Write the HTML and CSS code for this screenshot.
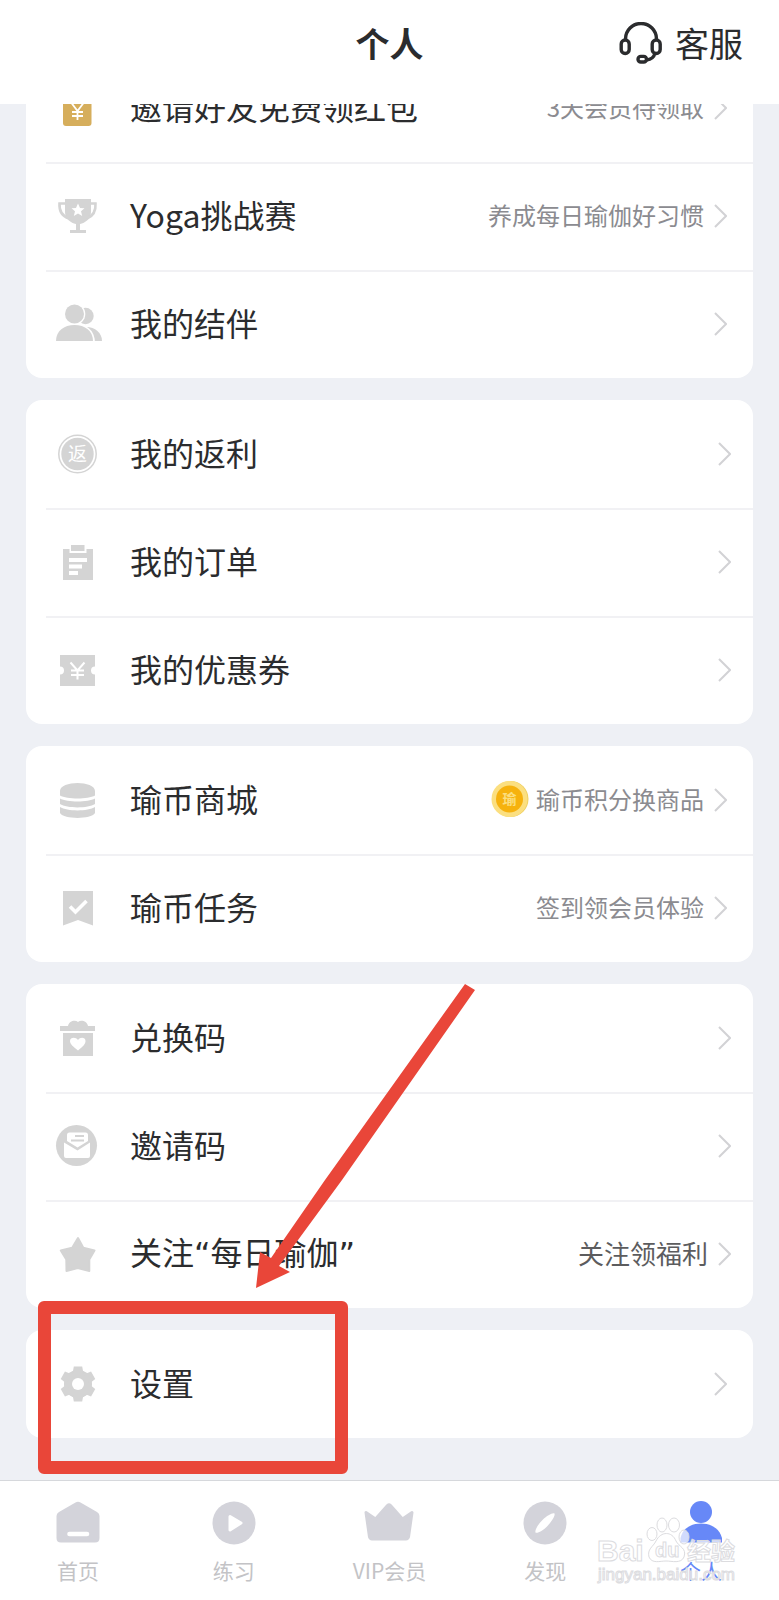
FILE: index.html
```html
<!DOCTYPE html>
<html lang="zh-CN">
<head>
<meta charset="utf-8">
<meta name="viewport" content="width=device-width, initial-scale=1">
<title>个人</title>
<link rel="stylesheet" href="styles.css">
</head>
<body>
<svg class="defs" aria-hidden="true">
  <symbol id="chevron" viewBox="0 0 13 24"><path d="M1 1 L12 12 L1 23" fill="none" stroke="currentColor" stroke-width="2"/></symbol>
</svg>
<div class="app">
  <header class="header">
    <h1 class="title">个人</h1>
    <button class="service" type="button">
      <svg class="service-icon" viewBox="0 0 44 42" fill="none" stroke="currentColor" stroke-width="3.400" aria-hidden="true">
        <path d="M6.500 18 V17 A15.500 15.500 0 0 1 37.500 17 V18"/>
        <rect x="2.200" y="18" width="8" height="13.500" rx="4"/>
        <rect x="33.200" y="18" width="8" height="13.500" rx="4"/>
        <path d="M36 31 C35 35.500 32 37.500 27.500 38"/>
        <rect x="19" y="34.400" width="8.500" height="5.600" rx="2.800"/>
      </svg>
      <span>客服</span>
    </button>
  </header>

  <main class="content">
    <section class="card">
      <a class="row" href="#invite-friends">
        <svg class="icon icon-gold" viewBox="0 0 48 48" aria-hidden="true"><rect x="9" y="6" width="28.500" height="36" rx="3" fill="currentColor"/><path d="M17.500 19 L23.500 27 L29.500 19 M18 28 H29 M18 32 H29 M23.500 27 V36" fill="none" stroke="#fff" stroke-width="1.800"/></svg>
        <span class="label">邀请好友免费领红包</span>
        <span class="hint">3天会员待领取</span>
        <svg class="chevron"><use href="#chevron"/></svg>
      </a>
      <a class="row" href="#challenge">
        <svg class="icon" viewBox="0 0 48 48" aria-hidden="true"><path d="M11 7 H37 V20 C37 27 31 31 26 32 V38 H32 V41 H16 V38 H22 V32 C17 31 11 27 11 20 Z" fill="currentColor"/><path d="M12 11.500 H5.500 C5 19 8 24 15 26.500 M36 11.500 H41.500 C42 19 39 24 33 26.500" fill="none" stroke="currentColor" stroke-width="2.600"/><path d="M24 11.500 L26 16 L30.500 16.300 L27 19.300 L28.200 24 L24 21.400 L19.800 24 L21 19.300 L17.500 16.300 L22 16 Z" fill="#fff"/></svg>
        <span class="label">Yoga挑战赛</span>
        <span class="hint">养成每日瑜伽好习惯</span>
        <svg class="chevron"><use href="#chevron"/></svg>
      </a>
      <a class="row" href="#companions">
        <svg class="icon" viewBox="0 0 48 48" aria-hidden="true"><circle cx="31.500" cy="16" r="8.200" fill="currentColor"/><path d="M30 27 C40 26 48 32 48 41 H30 Z" fill="currentColor"/><circle cx="20.500" cy="14" r="10.800" fill="#fff"/><path d="M0 43 C0 30 9 23.500 20.500 23.500 C32 23.500 41 30 41 43 Z" fill="#fff"/><circle cx="20.500" cy="14" r="9.500" fill="currentColor"/><path d="M2 41 C2 31 10 25 20.500 25 C31 25 39 31 39 41 Z" fill="currentColor"/></svg>
        <span class="label">我的结伴</span>
        <svg class="chevron"><use href="#chevron"/></svg>
      </a>
    </section>

    <section class="card">
      <a class="row row-wide" href="#rebate">
        <svg class="icon" viewBox="0 0 48 48" aria-hidden="true"><circle cx="23.500" cy="24" r="18.700" fill="none" stroke="currentColor" stroke-width="1.500"/><circle cx="23.500" cy="24" r="16.200" fill="currentColor"/><text x="23.500" y="31" class="rebate-char">返</text></svg>
        <span class="label">我的返利</span>
        <svg class="chevron"><use href="#chevron"/></svg>
      </a>
      <a class="row row-wide" href="#orders">
        <svg class="icon" viewBox="0 0 48 48" aria-hidden="true"><path d="M9 11 H15.500 V15 H32.500 V11 H39 V42 H9 Z M17 7 H30.500 V13 H17 Z" fill="currentColor"/><path d="M15 20 H33 V24 H15 Z M15 26.500 H28 V30.500 H15 Z M15 33 H24 V37 H15 Z" fill="#fff"/></svg>
        <span class="label">我的订单</span>
        <svg class="chevron"><use href="#chevron"/></svg>
      </a>
      <a class="row row-wide" href="#coupons">
        <svg class="icon" viewBox="0 0 48 48" aria-hidden="true"><path d="M6 9 H41 V20.500 A4 4 0 0 0 41 28.500 V40 H6 V28.500 A4 4 0 0 0 6 20.500 Z" fill="currentColor"/><path d="M16.500 16.500 L23.500 24.500 L30.500 16.500 M17 24.500 H30 M17 29 H30 M23.500 24 V33.500" fill="none" stroke="#fff" stroke-width="2"/></svg>
        <span class="label">我的优惠券</span>
        <svg class="chevron"><use href="#chevron"/></svg>
      </a>
    </section>

    <section class="card">
      <a class="row" href="#coin-shop">
        <svg class="icon" viewBox="0 0 48 48" aria-hidden="true"><path d="M6 15 C6 4.300 41 4.300 41 15 V19.500 C34 23.500 13 23.500 6 19.500 Z M6 22.500 C13 26.500 34 26.500 41 22.500 V28 C34 32.500 13 32.500 6 28 Z M6 31 C13 35.500 34 35.500 41 31 V37 C37 43.500 10 43.500 6 37 Z" fill="currentColor"/></svg>
        <span class="label">瑜币商城</span>
        <span class="hint">
          <svg class="coin" viewBox="0 0 38 38" aria-hidden="true"><circle cx="19.500" cy="19" r="18" fill="#eecf60"/><circle cx="18.500" cy="19" r="18" fill="#fbdf80"/><circle cx="18.500" cy="19" r="13.500" fill="#f6b20e"/><text x="18.500" y="24" class="coin-char">瑜</text></svg>
          瑜币积分换商品</span>
        <svg class="chevron"><use href="#chevron"/></svg>
      </a>
      <a class="row" href="#coin-tasks">
        <svg class="icon" viewBox="0 0 48 48" aria-hidden="true"><path d="M9 7 H39 V41.500 L24 36 L9 41.500 Z" fill="currentColor"/><path d="M16 22.500 L21.500 28 L32.500 17" fill="none" stroke="#fff" stroke-width="3.600"/></svg>
        <span class="label">瑜币任务</span>
        <span class="hint">签到领会员体验</span>
        <svg class="chevron"><use href="#chevron"/></svg>
      </a>
    </section>

    <section class="card">
      <a class="row row-wide" href="#redeem">
        <svg class="icon" viewBox="0 0 48 48" aria-hidden="true"><path d="M6 12 H14 C15 7 21 5.500 24 8 C27 5.500 33 7 34 12 H41 V17 H6 Z M9 19 H39 V42 H9 Z" fill="currentColor"/><path d="M24 36.500 C19 32.500 16 30 16 27 C16 23.500 21.500 22.500 24 26 C26.500 22.500 31.500 23.500 31.500 27 C31.500 30 29 32.500 24 36.500 Z" fill="#fff"/></svg>
        <span class="label">兑换码</span>
        <svg class="chevron"><use href="#chevron"/></svg>
      </a>
      <a class="row row-wide" href="#invite-code">
        <svg class="icon" viewBox="0 0 48 48" aria-hidden="true"><circle cx="22.500" cy="23.500" r="20.500" fill="currentColor"/><path d="M13 19 V13 Q13 10.500 15.500 10.500 H31.500 Q34 10.500 34 13 V19 L23.500 25.500 Z M10 20.500 L23.500 28.500 L36 20.500 V34 Q36 36 34 36 H12 Q10 36 10 34 Z" fill="#fff"/><path d="M21 14 H30 M17 18.500 H30" stroke="currentColor" stroke-width="2"/></svg>
        <span class="label">邀请码</span>
        <svg class="chevron"><use href="#chevron"/></svg>
      </a>
      <a class="row row-wide" href="#follow">
        <svg class="icon" viewBox="0 0 48 48" aria-hidden="true"><path d="M24 8 L29.300 17.800 L40.500 20.500 L35.300 29.500 L35.300 41 L23.700 38 L12.500 41 L12.300 29.500 L6.800 20.500 L18.200 17.800 Z" fill="currentColor" stroke="currentColor" stroke-width="2" stroke-linejoin="round"/></svg>
        <span class="label">关注<span class="quote">“</span>每日瑜伽<span class="quote">”</span></span>
        <span class="hint hint-strong">关注领福利</span>
        <svg class="chevron"><use href="#chevron"/></svg>
      </a>
    </section>

    <section class="card">
      <a class="row" href="#settings">
        <svg class="icon" viewBox="0 0 48 48" aria-hidden="true"><g fill="currentColor"><circle cx="24" cy="24" r="14"/><path id="teeth" d="M19.800 6.500 H28.200 L29 11 L32 14 H16 L19 11 Z M19.800 41.500 H28.200 L29 37 L32 34 H16 L19 37 Z"/><use href="#teeth" transform="rotate(60 24 24)"/><use href="#teeth" transform="rotate(120 24 24)"/></g><circle cx="24" cy="24" r="6" fill="#fff"/></svg>
        <span class="label">设置</span>
        <svg class="chevron"><use href="#chevron"/></svg>
      </a>
    </section>
  </main>

  <nav class="tabs">
    <a class="tab" href="#home">
      <svg class="tab-icon" viewBox="0 0 52 44" aria-hidden="true"><path d="M23.500 1.500 Q26 0 28.500 1.500 L45 11 Q47.500 12.500 47.500 15 V37 Q47.500 41.500 43 41.500 H9 Q4.500 41.500 4.500 37 V15 Q4.500 12.500 7 11 Z" fill="currentColor"/><path d="M17.500 33 H35" stroke="#fff" stroke-width="4.600" stroke-linecap="round"/></svg>
      <span>首页</span>
    </a>
    <a class="tab" href="#practice">
      <svg class="tab-icon" viewBox="0 0 52 44" aria-hidden="true"><circle cx="26" cy="22" r="21.500" fill="currentColor"/><path d="M22 15.500 L33 22 L22 29 Z" fill="#fff" stroke="#fff" stroke-width="3" stroke-linejoin="round"/></svg>
      <span>练习</span>
    </a>
    <a class="tab" href="#vip">
      <svg class="tab-icon" viewBox="0 0 52 44" aria-hidden="true"><path d="M3 11.500 L12.500 18 L24.500 4.500 Q26 3 27.500 4.500 L39.500 18 L49 11.500 L45.500 36 Q45 38 43 38 H9 Q7 38 6.500 36 Z" fill="currentColor" stroke="currentColor" stroke-width="3" stroke-linejoin="round"/></svg>
      <span>VIP会员</span>
    </a>
    <a class="tab" href="#discover">
      <svg class="tab-icon" viewBox="0 0 52 44" aria-hidden="true"><circle cx="26" cy="22" r="21.500" fill="currentColor"/><path d="M16.500 31.500 C15.500 29 20 22 24 18.500 C28 14.500 34 11 35.500 12.500 C36.500 15 32 21.500 28 25.500 C24 29.500 18 33 16.500 31.500 Z" fill="#fff"/></svg>
      <span>发现</span>
    </a>
    <a class="tab tab-active" href="#me" aria-current="page">
      <svg class="tab-icon" viewBox="0 0 52 44" aria-hidden="true"><circle cx="26" cy="11" r="11" fill="currentColor"/><path d="M5.500 41.500 V37 C8 26 18 22.500 26 22.500 C34 22.500 44 26 47 37 V41.500 Z" fill="currentColor"/></svg>
      <span>个人</span>
    </a>
    <svg class="watermark" viewBox="0 0 144 72" aria-hidden="true">
      <g class="mark">
        <ellipse cx="57" cy="20" rx="5" ry="6.500"/><ellipse cx="67" cy="11" rx="5" ry="7"/><ellipse cx="79" cy="11" rx="5.500" ry="7"/><ellipse cx="89" cy="23" rx="5" ry="7"/>
        <path d="M61 27 C66 17 77 17 81 27 C84 33 92 34 89 43 C86 50 77 47 71 47 C65 47 57 50 54 43 C52 35 58 33 61 27 Z"/>
        <text x="2" y="47" class="mark-name">Bai</text>
        <text x="60" y="43" class="mark-du">du</text>
        <text x="92" y="46" class="mark-cjk">经验</text>
        <text x="3" y="66" class="mark-url">jingyan.baidu.com</text>
      </g>
    </svg>
  </nav>
  <div class="highlight"></div>
  <svg class="arrow" viewBox="0 0 220 305" aria-hidden="true"><path d="M209 0 L219 6 L86 196 L23 282 L34 288 L0 304 L4 268 L15 274 L69 196 Z" fill="currentColor"/></svg>
</div>
</body>
</html>
```
FILE: styles.css
```css
* {
  box-sizing: border-box;
}

body {
  margin: 0;
  font-family: "Noto Sans CJK SC", "Noto Sans", sans-serif;
  color: #2b2c2e;
  background: #eef0f5;
}

a {
  color: inherit;
  text-decoration: none;
}

.defs {
  position: absolute;
  width: 0;
  height: 0;
}

.app {
  position: relative;
  display: flex;
  flex-direction: column;
  height: 100vh;
  overflow: hidden;
}

.header {
  display: grid;
  grid-template-columns: 1fr auto 1fr;
  align-items: center;
  flex: none;
  padding: 17px 36px 35px;
  background: #fff;
}

.title {
  grid-column: 2;
  margin: 0;
  font-size: 34px;
  font-weight: 700;
  line-height: 52px;
}

.service {
  display: flex;
  align-items: center;
  justify-self: end;
  gap: 12px;
  padding: 0;
  border: 0;
  background: none;
  color: inherit;
  font: inherit;
  font-size: 34px;
  line-height: 52px;
}

.service-icon {
  width: 44px;
  height: 42px;
}

/* The list rests at the end of its scroll range, above the tab bar. */
.content {
  display: flex;
  flex: 1;
  flex-direction: column;
  justify-content: flex-end;
  gap: 22px;
  min-height: 0;
  padding: 0 26px 42px;
  overflow: hidden;
}

.card {
  flex: none;
  border-radius: 16px;
  background: #fff;
}

.row {
  display: flex;
  align-items: center;
  height: 108px;
  padding: 0 26px 0 28px;
  background: linear-gradient(#f1f1f4, #f1f1f4) 20px 0 / 100% 2px no-repeat;
}

.row:first-child {
  background: none;
}

.row-wide {
  padding-right: 22px;
}

.icon {
  flex: none;
  width: 48px;
  height: 48px;
  margin-right: 28px;
  color: #d4d4d4;
}

.icon-gold {
  color: #d6ae5c;
}

.label {
  flex: 1;
  padding-bottom: 4px;
  font-size: 32px;
  line-height: 48px;
}

.quote {
  font-family: "DejaVu Sans", sans-serif;
}

.hint {
  display: flex;
  align-items: center;
  gap: 7px;
  padding-bottom: 2px;
  color: #8b8b90;
  font-size: 24px;
  line-height: 36px;
}

.hint-strong {
  color: #5c5c5e;
  font-size: 26px;
}

.coin {
  width: 38px;
  height: 38px;
}

.chevron {
  flex: none;
  width: 13px;
  height: 24px;
  margin-left: 10px;
  color: #d2d2d5;
}

.rebate-char,
.coin-char {
  text-anchor: middle;
}

.rebate-char {
  fill: #fff;
  font-size: 19px;
}

.coin-char {
  fill: #fbdf80;
  font-size: 14px;
  font-weight: 700;
}

.tabs {
  position: relative;
  display: flex;
  flex: none;
  padding: 20px 0 16px;
  border-top: 1px solid #d6d8dc;
  background: #fff;
}

.tab {
  display: flex;
  flex: 1;
  flex-direction: column;
  align-items: center;
  gap: 11px;
  color: #d3d3da;
  font-size: 21px;
  line-height: 28px;
}

.tab span {
  color: #c3c3c6;
}

.tab-icon {
  width: 52px;
  height: 44px;
}

.tab-active,
.tab-active span {
  color: #6788f7;
}

.watermark {
  position: absolute;
  right: 40px;
  bottom: 14px;
  width: 144px;
  height: 72px;
  pointer-events: none;
}

.mark {
  fill: #fff;
  fill-opacity: 0.7;
  stroke: #dcdcdf;
  stroke-width: 1;
}

.mark text {
  font-family: "Liberation Sans", "Noto Sans CJK SC", sans-serif;
}

.mark-name {
  font-size: 30px;
  font-weight: 700;
}

.mark-du {
  font-size: 20px;
  font-weight: 700;
}

.mark .mark-cjk {
  font-family: "Noto Sans CJK SC", sans-serif;
  font-size: 24px;
  font-weight: 700;
}

.mark-url {
  font-size: 17px;
}

.highlight {
  position: absolute;
  bottom: 126px;
  left: 38px;
  width: 310px;
  height: 173px;
  border: 13px solid #e94639;
  border-radius: 6px;
  pointer-events: none;
}

.arrow {
  position: absolute;
  bottom: 311px;
  left: 256px;
  width: 220px;
  height: 305px;
  color: #e94639;
  pointer-events: none;
}
```
